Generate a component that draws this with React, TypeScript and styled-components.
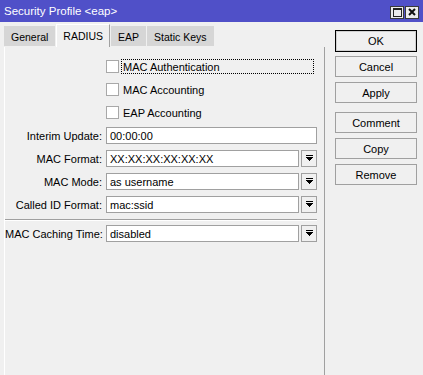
import React from "react";
import styled, { createGlobalStyle } from "styled-components";

const Global = createGlobalStyle`
  html, body { margin: 0; padding: 0; background: #f0f0f0; }
  body { font-family: "Liberation Sans", Arial, sans-serif; font-size: 11px; color: #000; }
  * { box-sizing: border-box; }
`;

const Window = styled.div`
  width: 423px;
  height: 375px;
  display: flex;
  flex-direction: column;
  background: #f0f0f0;
  overflow: hidden;
`;

const TitleBar = styled.div`
  height: 22px;
  flex: none;
  background: #5050c8;
  display: flex;
  align-items: center;
  padding: 0 4px 0 4px;
  color: #fff;
  font-size: 11.5px;
`;

const Title = styled.span`
  flex: 1;
  white-space: nowrap;
`;

const TitleButtons = styled.div`
  display: flex;
  gap: 1px;
  margin-top: 2px;
`;

const TitleButton = styled.div`
  width: 14px;
  height: 13px;
  background: #ececec;
  border: 1px solid #3a3a3a;
  display: flex;
  align-items: center;
  justify-content: center;
`;

const Body = styled.div`
  flex: 1;
  display: flex;
`;

const LeftPane = styled.div`
  width: 325px;
  display: flex;
  flex-direction: column;
  padding-left: 4px;
`;

const TabStrip = styled.div`
  height: 25px;
  display: flex;
  align-items: flex-end;
  gap: 1px;
`;

const Tab = styled.div<{ $active?: boolean }>`
  height: ${(p) => (p.$active ? 23 : 20)}px;
  margin-bottom: ${(p) => (p.$active ? 0 : 1)}px;
  padding: 0 6px;
  display: flex;
  align-items: center;
  font-size: 10.5px;
  background: ${(p) => (p.$active ? "#f0f0f0" : "#d6d6d6")};
  border-top: 1px solid ${(p) => (p.$active ? "#ffffff" : "#d6d6d6")};
  border-left: 1px solid ${(p) => (p.$active ? "#ffffff" : "#d6d6d6")};
  border-right: 1px solid ${(p) => (p.$active ? "#a0a0a0" : "#d6d6d6")};
  white-space: nowrap;
`;

const Panel = styled.div`
  flex: 1;
  border-left: 1px solid #ffffff;
  border-right: 1px solid #a0a0a0;
  padding: 11px 7px 0 0;
  display: flex;
  flex-direction: column;
`;

const Row = styled.div`
  height: 17px;
  margin-bottom: 6px;
  display: flex;
  align-items: center;
`;

const Label = styled.div`
  width: 101px;
  flex: none;
  padding-right: 4px;
  text-align: right;
  white-space: nowrap;
`;

const Field = styled.div`
  flex: 1;
  height: 17px;
  background: #fff;
  border: 1px solid #a0a0a0;
  padding: 0 3px;
  display: flex;
  align-items: center;
  white-space: nowrap;
  overflow: hidden;
`;

const Combo = styled.div`
  flex: 1;
  display: flex;
  gap: 2px;
  height: 17px;
`;

const DropButton = styled.div`
  width: 16px;
  flex: none;
  height: 17px;
  border: 1px solid #a0a0a0;
  background: #f0f0f0;
  display: flex;
  align-items: center;
  justify-content: center;
`;

const CheckBox = styled.div`
  width: 13px;
  height: 13px;
  flex: none;
  background: #fff;
  border: 1px solid #a8a8a8;
`;

const CheckLabel = styled.div<{ $focused?: boolean }>`
  flex: ${(p) => (p.$focused ? 1 : "none")};
  margin-left: 2px;
  margin-right: 3px;
  padding: 0 1px;
  height: 15px;
  display: flex;
  align-items: center;
  border: 1px dotted ${(p) => (p.$focused ? "#000" : "transparent")};
  white-space: nowrap;
`;

const Separator = styled.div`
  height: 2px;
  border-top: 1px solid #a0a0a0;
  border-bottom: 1px solid #ffffff;
  margin: 0 0 4px 0;
`;

const ButtonColumn = styled.div`
  width: 98px;
  padding: 8px 6px 0 10px;
  display: flex;
  flex-direction: column;
`;

const Button = styled.div<{ $default?: boolean; $gapAfter?: number }>`
  height: ${(p) => (p.$default ? 22 : 21)}px;
  margin-bottom: ${(p) => p.$gapAfter ?? 5}px;
  border: 1px solid ${(p) => (p.$default ? "#000" : "#a0a0a0")};
  box-shadow: ${(p) => (p.$default ? "inset 0 0 0 1px #d0d0d0" : "none")};
  background: #f0f0f0;
  display: flex;
  align-items: center;
  justify-content: center;
`;

const DropIcon = () => (
  <svg width="7" height="7" viewBox="0 0 7 7" shapeRendering="crispEdges">
    <rect x="0" y="0" width="7" height="1" fill="#000" />
    <rect x="0" y="2" width="7" height="1" fill="#000" />
    <rect x="1" y="3" width="5" height="1" fill="#000" />
    <rect x="2" y="4" width="3" height="1" fill="#000" />
    <rect x="3" y="5" width="1" height="1" fill="#000" />
  </svg>
);

const MaxIcon = () => (
  <svg width="10" height="10" viewBox="0 0 10 10" shapeRendering="crispEdges">
    <rect x="1" y="1" width="8" height="8" fill="none" stroke="#222" strokeWidth="1" />
    <rect x="1" y="1" width="8" height="2" fill="#222" />
  </svg>
);

const CloseIcon = () => (
  <svg width="10" height="10" viewBox="0 0 10 10">
    <path d="M2 2 L8 8 M8 2 L2 8" stroke="#111" strokeWidth="2" />
  </svg>
);

type FieldRow = { label: string; value: string; combo?: boolean };

const rows: FieldRow[] = [
  { label: "Interim Update:", value: "00:00:00" },
  { label: "MAC Format:", value: "XX:XX:XX:XX:XX:XX", combo: true },
  { label: "MAC Mode:", value: "as username", combo: true },
  { label: "Called ID Format:", value: "mac:ssid", combo: true },
];

const checks = ["MAC Authentication", "MAC Accounting", "EAP Accounting"];

const renderField = (r: FieldRow) =>
  r.combo ? (
    <Combo>
      <Field>{r.value}</Field>
      <DropButton>
        <DropIcon />
      </DropButton>
    </Combo>
  ) : (
    <Field>{r.value}</Field>
  );

export default function App() {
  return (
    <>
      <Global />
      <Window>
        <TitleBar>
          <Title>Security Profile &lt;eap&gt;</Title>
          <TitleButtons>
            <TitleButton>
              <MaxIcon />
            </TitleButton>
            <TitleButton>
              <CloseIcon />
            </TitleButton>
          </TitleButtons>
        </TitleBar>
        <Body>
          <LeftPane>
            <TabStrip>
              <Tab>General</Tab>
              <Tab $active>RADIUS</Tab>
              <Tab>EAP</Tab>
              <Tab>Static Keys</Tab>
            </TabStrip>
            <Panel>
              {checks.map((c, i) => (
                <Row key={c}>
                  <Label />
                  <CheckBox />
                  <CheckLabel $focused={i === 0}>{c}</CheckLabel>
                </Row>
              ))}
              {rows.map((r) => (
                <Row key={r.label}>
                  <Label>{r.label}</Label>
                  {renderField(r)}
                </Row>
              ))}
              <Separator />
              <Row>
                <Label>MAC Caching Time:</Label>
                {renderField({ label: "", value: "disabled", combo: true })}
              </Row>
            </Panel>
          </LeftPane>
          <ButtonColumn>
            <Button $default $gapAfter={4}>OK</Button>
            <Button>Cancel</Button>
            <Button $gapAfter={9}>Apply</Button>
            <Button>Comment</Button>
            <Button>Copy</Button>
            <Button>Remove</Button>
          </ButtonColumn>
        </Body>
      </Window>
    </>
  );
}
